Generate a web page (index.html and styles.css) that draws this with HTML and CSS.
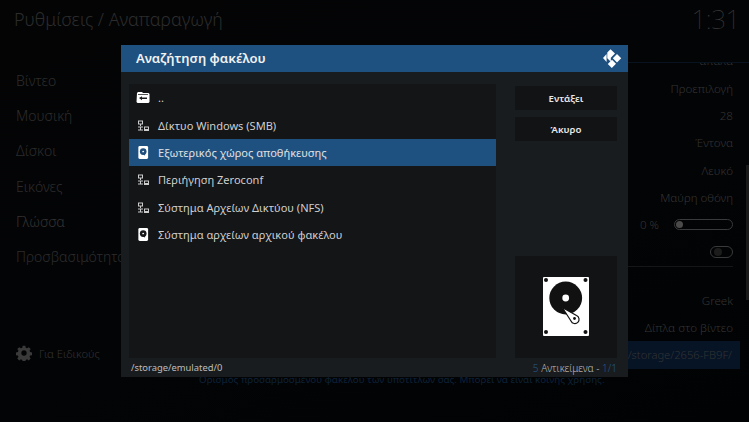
FILE: index.html
```html
<!DOCTYPE html>
<html lang="el">
<head>
<meta charset="utf-8">
<title>Αναζήτηση φακέλου</title>
<link rel="stylesheet" href="styles.css">
</head>
<body>
<div class="page">
  <header class="topbar">
    <h1 class="crumb">Ρυθμίσεις / Αναπαραγωγή</h1>
    <div class="clock">1:31</div>
  </header>
  <div class="main">
    <nav class="side">
      <ul class="side-list">
        <li>Βίντεο</li>
        <li>Μουσική</li>
        <li>Δίσκοι</li>
        <li>Εικόνες</li>
        <li class="side-on">Γλώσσα</li>
        <li>Προσβασιμότητα</li>
      </ul>
      <div class="side-level">
        <svg class="gear" viewBox="0 0 24 24"><path fill="#3a3a3a" fill-rule="evenodd" d="M10 1h4l.6 3 2 .9 2.600-1.700 2.800 2.800-1.700 2.600.9 2 3 .6v4l-3 .6-.9 2 1.700 2.600-2.800 2.800-2.600-1.700-2 .9-.6 3h-4l-.6-3-2-.9-2.600 1.700-2.800-2.800 1.700-2.600-.9-2-3-.6v-4l3-.6.9-2L2 6l2.800-2.800 2.600 1.700 2-.9zM12 8a4 4 0 1 0 0 8 4 4 0 0 0 0-8z"/></svg>
        <span>Για Ειδικούς</span>
      </div>
    </nav>
    <section class="values">
      <div class="val val-first">απαλά</div>
      <div class="val">Προεπιλογή</div>
      <div class="val">28</div>
      <div class="val">Έντονα</div>
      <div class="val">Λευκό</div>
      <div class="val">Μαύρη οθόνη</div>
      <div class="val val-slider"><span>0 %</span><i class="slider"><b></b></i></div>
      <div class="val val-toggle"><i class="toggle"><b></b></i></div>
      <div class="val-sep"></div>
      <div class="val">Greek</div>
      <div class="val">Δίπλα στο βίντεο</div>
      <div class="val val-on">/storage/2656-FB9F/</div>
      <p class="val-note">Ορισμός προσαρμοσμένου φακέλου των υποτίτλων σας. Μπορεί να είναι κοινής χρήσης.</p>
    </section>
    <div class="scrollbar"></div>
  </div>
</div>

<div class="dialog">
  <div class="dlg-head">
    <h2 class="dlg-title">Αναζήτηση φακέλου</h2>
    <svg class="kodi" viewBox="0 0 20 20"><path fill="#fff" d="M1 10 4.600 6v8zM8.500 1.200 13 5.500 8.800 9.800v4L5.300 10.300V4.500zM15 6l4.200 4.200L15 14.500l-4.200-4.300zM10 11.800l4 4-4.200 4.200-4-4z"/></svg>
  </div>
  <div class="dlg-body">
    <div class="dlg-left">
      <ul class="files">
        <li class="file"><svg class="ico" viewBox="0 0 14 12"><path fill="#fff" d="M1 1.500 2 .5h4l1 1h5.500l1 1V10.500l-1 1h-11l-1-1z"/><path fill="#1a1c1e" d="M2 2.600h10v.6H2zM3 6.500 6 4.700V6h5v1.500H6v1.300z"/></svg><span>..</span></li>
        <li class="file"><svg class="ico" viewBox="0 0 14 12"><g fill="none" stroke="#ccc"><rect x="2.500" y="1.500" width="4" height="3"/><rect x="8.500" y="7.500" width="4" height="2.500"/><path d="M4.500 4.500v2M2 7.500h5M4.500 7.500v3M2 10.500h5"/></g><path fill="#ccc" d="M8 10.500h5v1H8z"/></svg><span>Δίκτυο Windows (SMB)</span></li>
        <li class="file file-on"><svg class="ico" viewBox="0 0 14 14"><rect x="2" y="0" width="10.500" height="14" rx="1.500" fill="#fff"/><circle cx="7.200" cy="6" r="3.600" fill="#1f4f7d"/><circle cx="7.200" cy="6" r="1" fill="#fff"/><path d="M7 7l2 3" stroke="#1f4f7d" stroke-width="1.200"/></svg><span>Εξωτερικός χώρος αποθήκευσης</span></li>
        <li class="file"><svg class="ico" viewBox="0 0 14 12"><g fill="none" stroke="#ccc"><rect x="2.500" y="1.500" width="4" height="3"/><rect x="8.500" y="7.500" width="4" height="2.500"/><path d="M4.500 4.500v2M2 7.500h5M4.500 7.500v3M2 10.500h5"/></g><path fill="#ccc" d="M8 10.500h5v1H8z"/></svg><span>Περιήγηση Zeroconf</span></li>
        <li class="file"><svg class="ico" viewBox="0 0 14 12"><g fill="none" stroke="#ccc"><rect x="2.500" y="1.500" width="4" height="3"/><rect x="8.500" y="7.500" width="4" height="2.500"/><path d="M4.500 4.500v2M2 7.500h5M4.500 7.500v3M2 10.500h5"/></g><path fill="#ccc" d="M8 10.500h5v1H8z"/></svg><span>Σύστημα Αρχείων Δικτύου (NFS)</span></li>
        <li class="file"><svg class="ico" viewBox="0 0 14 14"><rect x="2" y="0" width="10.500" height="14" rx="1.500" fill="#fff"/><circle cx="7.200" cy="6" r="3.600" fill="#16181a"/><circle cx="7.200" cy="6" r="1" fill="#fff"/><path d="M7 7l2 3" stroke="#16181a" stroke-width="1.200"/></svg><span>Σύστημα αρχείων αρχικού φακέλου</span></li>
      </ul>
      <div class="dlg-foot">
        <span class="path">/storage/emulated/0</span>
        <span class="count"><em>5</em> Αντικείμενα - <em>1/1</em></span>
      </div>
    </div>
    <div class="dlg-right">
      <button class="btn">Εντάξει</button>
      <button class="btn">Άκυρο</button>
      <div class="preview">
        <svg class="hdd" viewBox="0 0 46 60">
          <rect x="0" y="0" width="46" height="59" rx="1" fill="#fff"/>
          <g fill="#111"><circle cx="3" cy="3" r="2"/><circle cx="42.500" cy="3" r="2"/><circle cx="3" cy="55" r="2"/><circle cx="42.500" cy="55" r="2"/></g>
          <circle cx="22.700" cy="21" r="16.400" fill="#111"/>
          <circle cx="22.700" cy="21" r="3.400" fill="#fff"/>
          <path d="M19.300 30.500 33.500 38.500a4.200 4.200 0 1 1-5.500 5.500z" fill="#fff" stroke="#111" stroke-width="1.200" stroke-linejoin="round"/>
          <circle cx="31.500" cy="41.500" r="1.400" fill="#111"/>
        </svg>
      </div>
    </div>
  </div>
</div>
</body>
</html>
```

FILE: styles.css
```css
* { box-sizing: border-box; }
html, body { margin: 0; padding: 0; }
body {
  width: 749px;
  height: 422px;
  overflow: hidden;
  background: #020304;
  font-family: "Noto Sans", "Open Sans", sans-serif;
  position: relative;
}
.page {
  width: 749px;
  height: 422px;
  display: flex;
  flex-direction: column;
  background: linear-gradient(160deg, #040405 0%, #030406 60%, #010203 100%);
}
.topbar {
  height: 45px;
  flex: none;
  display: flex;
  justify-content: space-between;
  align-items: flex-start;
  padding: 6px 9px 0 14px;
}
.crumb {
  margin: 0;
  font-size: 17.900px;
  font-weight: 300;
  line-height: 26px;
  color: #2c2c2c;
}
.clock {
  font-size: 26px;
  font-weight: 100;
  line-height: 27px;
  letter-spacing: -0.4px;
  color: #3a3a3a;
}
.main { flex: 1; display: flex; min-height: 0; position: relative; }
.side { width: 183px; flex: none; display: flex; flex-direction: column; padding: 18px 0 0 16px; }
.side-list { list-style: none; margin: 0; padding: 0; }
.side-list li {
  height: 35.200px;
  line-height: 35.200px;
  font-size: 14px;
  font-weight: 300;
  color: #2c2c2c;
  white-space: nowrap;
}
.side-list .side-on { color: #333; }
.side-level {
  margin-top: 71px;
  display: flex;
  align-items: center;
  gap: 7px;
  font-size: 11.200px;
  font-weight: 300;
  color: #333;
}
.gear { width: 16px; height: 16px; flex: none; }
.values {
  flex: 1;
  display: flex;
  flex-direction: column;
  padding-right: 16px;
  margin-top: 17px;
  border-top: 1px solid #07141f;
  overflow: hidden;
}
.val {
  height: 27.300px;
  flex: none;
  line-height: 27.300px;
  text-align: right;
  font-size: 11.600px;
  font-weight: 300;
  color: #333;
  white-space: nowrap;
}
.val-first { margin-top: -15.600px; }
.val-slider { display: flex; justify-content: flex-end; align-items: center; gap: 15px; }
.slider { width: 59px; height: 11px; border: 1px solid #3a3a3a; border-radius: 6px; display: block; padding: 1px; }
.slider b { display: block; width: 7px; height: 7px; border-radius: 50%; background: #4a4a4a; }
.val-toggle { display: flex; justify-content: flex-end; align-items: center; }
.toggle { width: 23px; height: 12px; border: 1px solid #3a3a3a; border-radius: 6px; display: block; padding: 1px 0 0 3px; }
.toggle b { display: block; width: 8px; height: 8px; border-radius: 50%; background: #1c1c1c; }
.val-sep { height: 1px; flex: none; background: #141618; margin: 0 0 20px 0; }
.val-on { background: #061426; margin-right: -7px; padding-right: 8px; font-size: 11.200px; }
.val-note {
  margin: 4px 0 0 16px;
  font-size: 9.800px;
  line-height: 14px;
  color: #0d2239;
  white-space: nowrap;
}
.scrollbar { position: absolute; right: 0; top: 120px; width: 3px; height: 135px; background: #1a1a1a; }

.dialog {
  position: absolute;
  left: 121px;
  top: 45px;
  width: 507px;
  height: 332px;
  background: #191c1f;
  display: flex;
  flex-direction: column;
}
.dlg-head {
  height: 27px;
  flex: none;
  background: #1f5180;
  display: flex;
  align-items: center;
  justify-content: space-between;
  padding: 0 6px 1px 15px;
}
.dlg-title { margin: 0; font-size: 13.100px; font-weight: 600; color: #f2f2f2; }
.kodi { width: 20px; height: 20px; }
.dlg-body { flex: 1; display: flex; min-height: 0; padding: 12px 11px 0 8px; gap: 19px; }
.dlg-left { width: 367px; flex: none; position: relative; height: 274px; background: #131517; }
.files { list-style: none; margin: 0; padding: 0; }
.file {
  height: 27.400px;
  display: flex;
  align-items: center;
  padding-left: 7px;
  gap: 8px;
  font-size: 11.050px;
  color: #cfcfcf;
}
.file-on { background: #1f5180; color: #e0e0e0; }
.ico { width: 14px; height: 13px; flex: none; }
.dlg-foot {
  position: absolute;
  left: 2px;
  width: 486px;
  top: 274px;
  height: 19px;
  display: flex;
  justify-content: space-between;
  align-items: center;
  font-size: 9.400px;
  color: #bdbdbd;
  white-space: nowrap;
}
.count { font-size: 10px; font-weight: 300; }
.count em { font-style: normal; color: #24598c; }
.dlg-right { width: 102px; flex: none; display: flex; flex-direction: column; height: 274px; }
.btn {
  height: 24px;
  flex: none;
  margin: 2px 0 5px;
  border: 0;
  background: #121315;
  color: #e8e8e8;
  font: 600 9.700px "Noto Sans", sans-serif;
  padding: 0;
}
.preview {
  margin-top: auto;
  height: 102px;
  background: #111315;
  display: flex;
  align-items: center;
  justify-content: center;
}
.hdd { width: 46px; height: 60px; }
```
